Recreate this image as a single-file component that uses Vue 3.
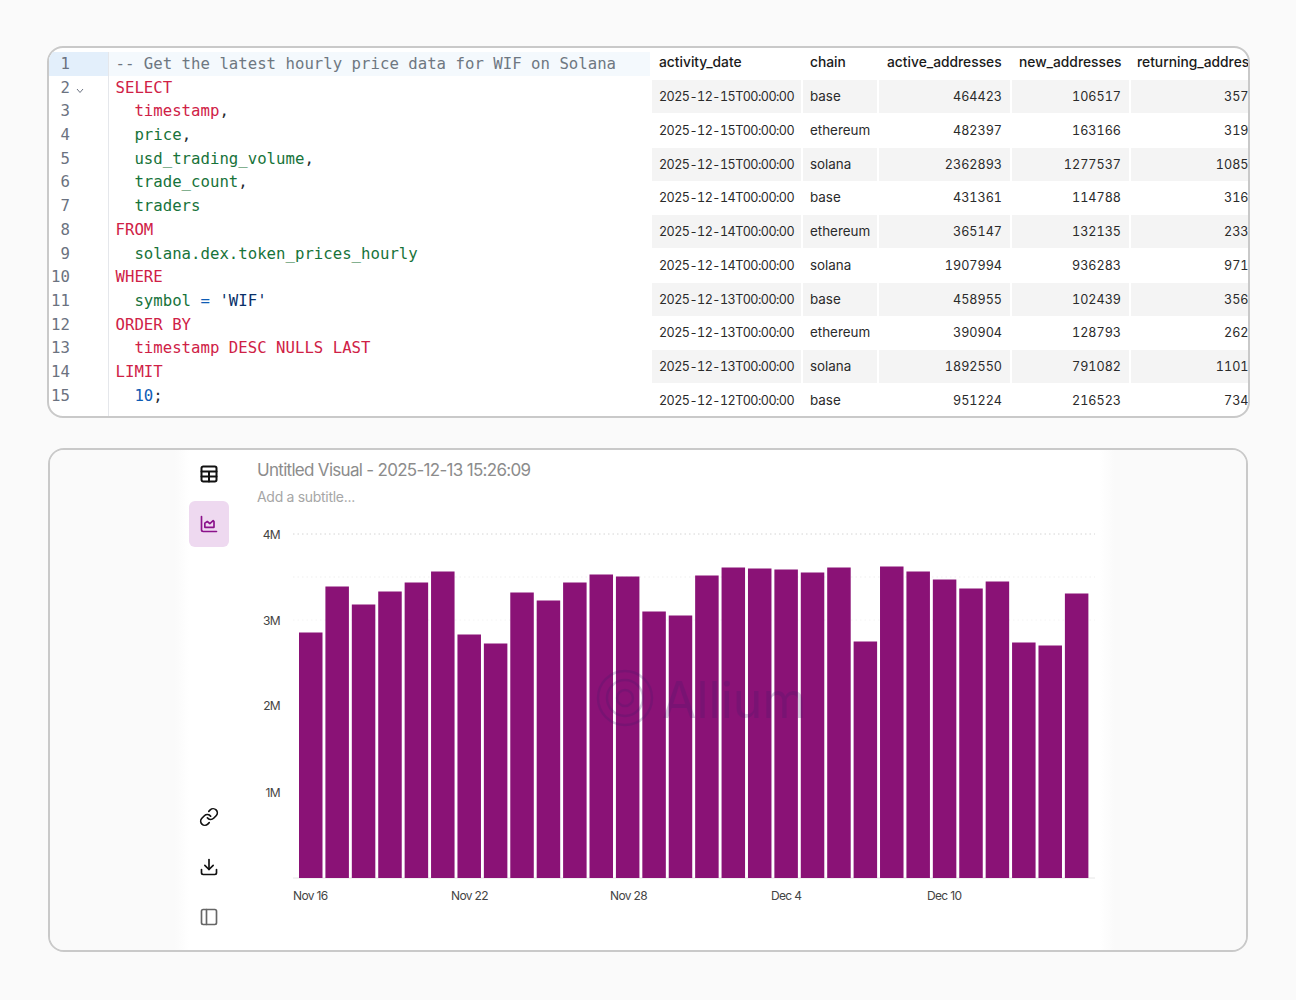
<script setup>
const code = [
  [['c', '-- Get the latest hourly price data for WIF on Solana']],
  [['k', 'SELECT']],
  [['k', '  timestamp'], ['p', ',']],
  [['g', '  price'], ['p', ',']],
  [['g', '  usd_trading_volume'], ['p', ',']],
  [['g', '  trade_count'], ['p', ',']],
  [['g', '  traders']],
  [['k', 'FROM']],
  [['g', '  solana.dex.token_prices_hourly']],
  [['k', 'WHERE']],
  [['g', '  symbol '], ['b', '='], ['p', ' '], ['s', "'WIF'"]],
  [['k', 'ORDER BY']],
  [['k', '  timestamp DESC NULLS LAST']],
  [['k', 'LIMIT']],
  [['b', '  10'], ['p', ';']]
]
const headers = ['activity_date', 'chain', 'active_addresses', 'new_addresses', 'returning_addresses']
const rows = [
  ['2025-12-15T00:00:00', 'base', '464423', '106517', '357906'],
  ['2025-12-15T00:00:00', 'ethereum', '482397', '163166', '319231'],
  ['2025-12-15T00:00:00', 'solana', '2362893', '1277537', '1085356'],
  ['2025-12-14T00:00:00', 'base', '431361', '114788', '316573'],
  ['2025-12-14T00:00:00', 'ethereum', '365147', '132135', '233012'],
  ['2025-12-14T00:00:00', 'solana', '1907994', '936283', '971711'],
  ['2025-12-13T00:00:00', 'base', '458955', '102439', '356516'],
  ['2025-12-13T00:00:00', 'ethereum', '390904', '128793', '262111'],
  ['2025-12-13T00:00:00', 'solana', '1892550', '791082', '1101468'],
  ['2025-12-12T00:00:00', 'base', '951224', '216523', '734701']
]
const tops = [633,587,605,592,583,572,635,644,593,601,583,575,577,612,616,576,568,569,570,573,568,642,567,572,580,589,582,643,646,594]
const bars = tops.map((top, i) => ({ x: 299 + i * 26.41, y: top - 0.5, h: 878.5 - top }))
const yLabels = [['4M', 539], ['3M', 625], ['2M', 710], ['1M', 797]]
const xLabels = [['Nov 16', 293], ['Nov 22', 451], ['Nov 28', 610], ['Dec 4', 771], ['Dec 10', 927]]
</script>

<template>
  <main class="page">
    <section class="panel top">
      <div class="editor">
        <div v-for="(line, i) in code" :key="i" class="line" :class="{ active: i === 0 }">
          <span class="num">{{ i + 1 }}<svg v-if="i === 1" class="fold" viewBox="0 0 8 6" width="8" height="6"><path d="M1 1l3 3.5L7 1" fill="none" stroke="#6b7280" stroke-width="1"/></svg></span>
          <span class="src"><span v-for="(tok, j) in line" :key="j" :class="tok[0]">{{ tok[1] }}</span></span>
        </div>
        <div class="gutter-rest"></div>
      </div>
      <div class="results">
        <div class="row head">
          <div v-for="h in headers" :key="h" class="cell">{{ h }}</div>
        </div>
        <div v-for="(r, i) in rows" :key="i" class="row body" :class="{ odd: i % 2 === 0 }">
          <div v-for="(v, j) in r" :key="j" class="cell" :class="{ numeric: j > 1, date: j === 0 }">{{ v }}</div>
        </div>
      </div>
    </section>

    <section class="panel bottom">
      <div class="spacer"></div>
      <nav class="rail">
        <div class="rail-group">
          <button class="tool">
            <svg viewBox="0 0 24 24" width="20" height="20" fill="none" stroke="#111" stroke-width="2.4" stroke-linecap="round" stroke-linejoin="round"><rect x="3" y="3" width="18" height="18" rx="2"/><path d="M3 9h18M3 15h18M12 9v12"/></svg>
          </button>
          <button class="tool on">
            <svg viewBox="0 0 24 24" width="20" height="20" fill="none" stroke="#8b128b" stroke-width="2" stroke-linecap="round" stroke-linejoin="round"><path d="M3 3v16a2 2 0 0 0 2 2h16"/><path d="M7 16v-5l3-2 3 2.5 4-3.5 1 1v7z"/></svg>
          </button>
        </div>
        <div class="rail-group">
          <button class="tool">
            <svg viewBox="0 0 24 24" width="20" height="20" fill="none" stroke="#111" stroke-width="2" stroke-linecap="round" stroke-linejoin="round"><path d="M10 13a5 5 0 0 0 7.54.54l3-3a5 5 0 0 0-7.07-7.07l-1.72 1.71"/><path d="M14 11a5 5 0 0 0-7.54-.54l-3 3a5 5 0 0 0 7.07 7.07l1.71-1.71"/></svg>
          </button>
          <button class="tool">
            <svg viewBox="0 0 24 24" width="20" height="20" fill="none" stroke="#111" stroke-width="2" stroke-linecap="round" stroke-linejoin="round"><path d="M12 3v12"/><path d="M7 10l5 5 5-5"/><path d="M3 15v4a2 2 0 0 0 2 2h14a2 2 0 0 0 2-2v-4"/></svg>
          </button>
          <button class="tool">
            <svg viewBox="0 0 24 24" width="20" height="20" fill="none" stroke="#666" stroke-width="2" stroke-linecap="round" stroke-linejoin="round"><rect x="3" y="3" width="18" height="18" rx="2"/><path d="M9 3v18"/></svg>
          </button>
        </div>
      </nav>
      <div class="visual">
        <h2 class="title">Untitled Visual - 2025-12-13 15:26:09</h2>
        <p class="subtitle">Add a subtitle...</p>
        <svg class="chart" viewBox="229 510 870 440" width="870" height="440">
          <line x1="293" x2="1095" y1="534" y2="534" stroke="#d4d4d4" stroke-dasharray="1.5 3"/>
          <line x1="293" x2="1095" y1="577" y2="577" stroke="#efefef" stroke-dasharray="1.5 3"/>
          <line x1="293" x2="1095" y1="620" y2="620" stroke="#f4f4f4" stroke-dasharray="1.5 3"/>
          <line x1="293" x2="1095" y1="878" y2="878" stroke="#e6e6e6"/>
          <rect v-for="(b, i) in bars" :key="i" :x="b.x" :y="b.y" width="23.5" :height="b.h" fill="#8a1276"/>
          <g opacity="0.2" fill="none" stroke="#3b1a6b" stroke-width="2.5">
            <circle cx="625" cy="698" r="27"/>
            <circle cx="625" cy="698" r="18"/>
            <circle cx="625" cy="698" r="8"/>
          </g>
          <text x="662" y="718" class="mark">Allium</text>
          <text v-for="l in yLabels" :key="l[0]" x="280" :y="l[1]" text-anchor="end" class="axis">{{ l[0] }}</text>
          <text v-for="l in xLabels" :key="l[0]" :x="l[1]" y="900" class="axis">{{ l[0] }}</text>
        </svg>
      </div>
      <div class="spacer-right"></div>
    </section>
  </main>
</template>

<style>
html, body { margin: 0; background: #fafafa; }
</style>

<style scoped>
.page {
  box-sizing: border-box;
  width: 1296px;
  height: 1000px;
  padding: 46px 0 0 47px;
  display: flex;
  flex-direction: column;
  align-items: flex-start;
  gap: 30px;
  font-family: Inter, "Liberation Sans", sans-serif;
  background: #fafafa;
}
.panel {
  box-sizing: border-box;
  border: 2px solid #c9c9c9;
  border-radius: 16px;
  overflow: hidden;
  background: #fff;
  display: flex;
}
.top { width: 1203px; height: 372px; }
.bottom { width: 1200px; height: 504px; margin-left: 1px; background: #fafafa; }

.editor {
  width: 601px;
  flex: none;
  padding-top: 4px;
  display: flex;
  flex-direction: column;
  font-family: "DejaVu Sans Mono", "Liberation Mono", monospace;
  font-size: 15.7px;
  box-sizing: border-box;
}
.line {
  display: flex;
  height: 23.7px;
  line-height: 23.7px;
  white-space: pre;
}
.num {
  position: relative;
  box-sizing: border-box;
  width: 60px;
  flex: none;
  padding-right: 38px;
  text-align: right;
  color: #6b7280;
  border-right: 1px solid #e5e7eb;
}
.fold { position: absolute; left: 27px; top: 12px; }
.src { padding-left: 6.5px; flex: 1; }
.line.active { background: #f4f9fd; }
.line.active .num { background: #e3effb; }
.gutter-rest {
  flex: 1;
  width: 60px;
  box-sizing: border-box;
  border-right: 1px solid #e5e7eb;
}
.c { color: #6e7781; }
.k { color: #cf2146; }
.g { color: #17733a; }
.b { color: #0f5cb5; }
.s { color: #0a3069; }
.p { color: #24292f; }

.results {
  flex: 1;
  min-width: 0;
  overflow: hidden;
  padding-left: 2px;
  font-size: 13.4px;
  color: #2a2a2a;
}
.row {
  display: grid;
  grid-template-columns: 149px 74px 131px 117px 150px;
  column-gap: 2px;
  width: 640px;
}
.head { height: 32px; align-items: start; color: #1a1a1a; font-size: 13.8px; font-weight: 500; }
.body { height: 33.75px; }
.cell {
  padding: 0 8px;
  line-height: 33px;
  white-space: nowrap;
  box-sizing: border-box;
}
.head .cell { line-height: 29px; }
.odd .cell { background: #f4f4f4; height: 33px; }
.numeric, .date {
  font-size: 12.6px;
  font-variant-numeric: tabular-nums;
}
.numeric { text-align: right; }
.date { letter-spacing: -0.55px; }
.cell:first-child, .cell:nth-child(2) { padding-left: 7px; }
.head .cell:nth-child(4) { padding-left: 7px; }
.cell:nth-child(5) { padding-left: 6px; }

.spacer {
  width: 139px;
  flex: none;
  background: linear-gradient(90deg, #fafafa 125px, #fff);
}
.rail {
  width: 40px;
  flex: none;
  background: #fff;
  box-sizing: border-box;
  padding: 1px 0 10px;
  display: flex;
  flex-direction: column;
  justify-content: space-between;
}
.rail-group { display: flex; flex-direction: column; gap: 4px; }
.tool {
  width: 40px;
  height: 46px;
  padding: 0;
  border: 0;
  border-radius: 6px;
  background: transparent;
  display: flex;
  align-items: center;
  justify-content: center;
}
.tool.on { background: #eed9f0; }
.visual {
  width: 870px;
  flex: none;
  background: #fff;
  box-sizing: border-box;
  padding-top: 9px;
}
.spacer-right {
  flex: 1;
  background: linear-gradient(90deg, #fff, #fafafa 16px);
}
.title {
  margin: 0 0 0 28px;
  font-size: 17px;
  line-height: 22px;
  font-weight: 400;
  letter-spacing: -0.7px;
  color: #8c8c8c;
}
.subtitle {
  margin: 7px 0 0 28px;
  font-size: 14px;
  line-height: 18px;
  letter-spacing: -0.3px;
  color: #a6a6a6;
}
.chart { display: block; margin-top: 4px; }
.axis {
  font-family: Inter, "Liberation Sans", sans-serif;
  font-size: 12px;
  letter-spacing: -0.65px;
  fill: #444;
}
.mark {
  font-family: Inter, "Liberation Sans", sans-serif;
  font-size: 50px;
  fill: #3b1a6b;
  opacity: 0.2;
}
</style>
